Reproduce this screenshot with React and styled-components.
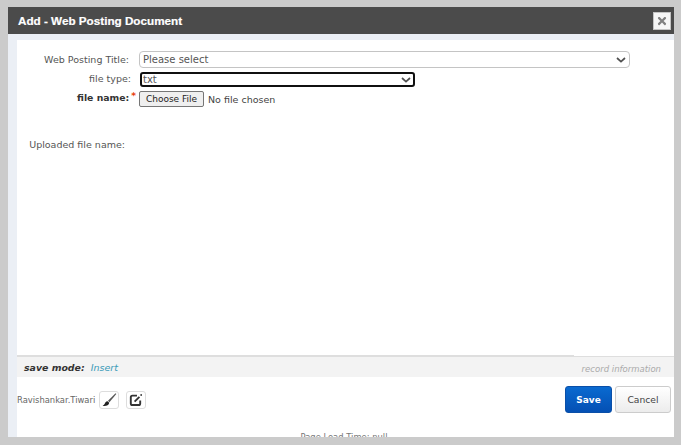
import styled, { createGlobalStyle } from 'styled-components'
import { FaTimes } from 'react-icons/fa'

const GlobalStyle = createGlobalStyle`
    html, body {
        margin: 0;
        padding: 0;
        height: 445px;
        overflow: hidden;
        background: #cbcbcb;
    }
`

const Page = styled.div`
    box-sizing: border-box;
    width: 681px;
    height: 445px;
    padding: 7px 7px 8px 8px;
    font-family: "DejaVu Sans", Verdana, sans-serif;
    font-size: 9.5px;
    color: #444;
`
const Dialog = styled.div`
    height: 430px;
    display: flex;
    flex-direction: column;
    overflow: hidden;
    background: #ebeff5;
`
const TitleBar = styled.div`
    flex: none;
    height: 27px;
    background: #4b4b4b;
    display: flex;
    align-items: center;
    justify-content: space-between;
    padding: 0 3px 0 10px;
`
const Title = styled.h1`
    margin: 0;
    font-family: "Liberation Sans", Arial, sans-serif;
    font-size: 11.7px;
    font-weight: 700;
    color: #fff;
    -webkit-text-stroke: 0.2px #fff;
`
const CloseButton = styled.button`
    box-sizing: border-box;
    width: 18px;
    height: 18px;
    padding: 0;
    border: 1px solid #c4c4c4;
    background: #f6f6f6;
    color: #808080;
    display: flex;
    align-items: center;
    justify-content: center;
    font-size: 12px;
`
const Body = styled.div`
    flex: 1;
    margin: 6px 0 0 9px;
    background: #fff;
    display: flex;
    flex-direction: column;
    min-height: 0;
`
const Form = styled.div`
    flex: none;
    height: 315px;
    padding-top: 11px;
    box-sizing: border-box;
`
const Row = styled.div`
    display: flex;
    align-items: center;
    height: ${(p) => p.$height}px;
    margin-bottom: ${(p) => p.$gap || 0}px;
`
const Label = styled.label`
    flex: none;
    box-sizing: border-box;
    width: ${(p) => p.$width}px;
    padding-bottom: ${(p) => p.$lift || 0}px;
    text-align: right;
    font-weight: ${(p) => (p.$bold ? 700 : 400)};
    font-size: ${(p) => (p.$bold ? 9.3 : 9.5)}px;
    color: ${(p) => (p.$bold ? '#333' : '#555')};
    white-space: nowrap;
`
const Star = styled.span`
    color: #e8400c;
    font-size: 9px;
    margin-left: 2px;
    position: relative;
    top: -2px;
`
const SelectBox = styled.div`
    box-sizing: border-box;
    height: ${(p) => p.$height}px;
    width: ${(p) => p.$width}px;
    margin-left: ${(p) => p.$left}px;
    border: ${(p) => (p.$focused ? '2px solid #101010' : '1px solid #c4c4c4')};
    border-radius: ${(p) => (p.$focused ? 3 : 4)}px;
    display: flex;
    align-items: center;
    justify-content: space-between;
    padding: ${(p) => (p.$focused ? '0 2px 0 1px' : '0 3px 0 3px')};
    font-size: 10px;
    color: #555;
    background: #fff;
`
const Chevron = () => (
    <svg width="10" height="6" viewBox="0 0 10 6">
        <path d="M1 1l4 3.6L9 1" fill="none" stroke="#505050" strokeWidth="1.7" />
    </svg>
)
const BrushIcon = () => (
    <svg width="18" height="16" viewBox="0 0 18 16">
        <path d="M15.6 1.2 8 8.8l1.4 1.4L16.3 2z" fill="#555" />
        <path d="M7.6 9.2C5.6 9.3 5.2 10.8 4.6 12 4.2 12.8 3.4 13.4 2.6 13.8 5.6 14.4 9 13.4 9.2 10.8z" fill="#222" />
    </svg>
)
const EditIcon = () => (
    <svg width="16" height="14" viewBox="0 0 16 14">
        <path d="M9 2.6H4.4A1.6 1.6 0 0 0 2.8 4.2v6.2A1.6 1.6 0 0 0 4.4 12h6.2a1.6 1.6 0 0 0 1.6-1.6V7.6" fill="none" stroke="#333" strokeWidth="1.9" />
        <path d="M6.6 8.6 11.4 3.8" fill="none" stroke="#333" strokeWidth="1.9" />
        <rect x="12.4" y="1.2" width="1.6" height="1.6" fill="#333" />
    </svg>
)
const FileRow = styled.div`
    display: flex;
    align-items: center;
    margin-left: 3px;
`
const ChooseButton = styled.button`
    box-sizing: border-box;
    width: 65px;
    height: 16px;
    padding: 0;
    border: 1px solid #767676;
    border-radius: 2px;
    background: #efefef;
    color: #222;
    font-family: "DejaVu Sans", Verdana, sans-serif;
    font-size: 9px;
    line-height: 14px;
`
const FileText = styled.span`
    margin-left: 4px;
    color: #444;
`
const Status = styled.div`
    flex: none;
    height: 22px;
    box-sizing: border-box;
    border-top: 2px solid #dedede;
    background: #f3f3f3;
    display: flex;
    align-items: center;
    justify-content: space-between;
    padding: 0 13px 0 7px;
    position: relative;
    &::after {
        content: '';
        position: absolute;
        top: -2px;
        right: 0;
        width: 100px;
        height: 1px;
        background: #fff;
    }
`
const Mode = styled.span`
    font-style: italic;
    font-weight: 700;
    font-size: 9.4px;
    color: #333;
`
const ModeValue = styled.span`
    font-style: italic;
    color: #3a9ab8;
    margin-left: 6px;
`
const RecordInfo = styled.span`
    font-style: italic;
    font-size: 8.5px;
    color: #aaa;
    padding-top: 3px;
`
const Actions = styled.div`
    flex: none;
    height: 51px;
    display: flex;
    align-items: center;
    justify-content: space-between;
    padding: 0 3px 6px 0;
    box-sizing: border-box;
`
const UserTools = styled.div`
    display: flex;
    align-items: center;
    font-size: 8.4px;
    color: #666;
`
const ToolButton = styled.button`
    box-sizing: border-box;
    width: 20px;
    height: 18px;
    margin-left: ${(p) => p.$left}px;
    padding: 0;
    border: 1px solid #ddd;
    border-radius: 3px;
    background: #fff;
    display: flex;
    align-items: center;
    justify-content: center;
`
const ButtonGroup = styled.div`
    display: flex;
    gap: 3px;
`
const SaveButton = styled.button`
    box-sizing: border-box;
    width: 47px;
    height: 27px;
    padding: 0;
    border: 1px solid #0a4fa8;
    border-radius: 3px;
    background: linear-gradient(#0a6ad0, #0450b4);
    color: #fff;
    font-family: "DejaVu Sans", Verdana, sans-serif;
    font-size: 9px;
    font-weight: 700;
`
const CancelButton = styled.button`
    box-sizing: border-box;
    width: 56px;
    height: 27px;
    padding: 0;
    border: 1px solid #ccc;
    border-radius: 3px;
    background: linear-gradient(#fff, #ececec);
    color: #444;
    font-family: "DejaVu Sans", Verdana, sans-serif;
    font-size: 9.2px;
`
const LoadTime = styled.div`
    text-align: center;
    font-size: 8.4px;
    color: #777;
    padding-right: 3px;
    margin-top: 4px;
`

const App = () => {
    return (
        <Page>
            <GlobalStyle />
            <Dialog>
                <TitleBar>
                    <Title>Add - Web Posting Document</Title>
                    <CloseButton><FaTimes /></CloseButton>
                </TitleBar>
                <Body>
                    <Form>
                        <Row $height={17} $gap={4}>
                            <Label $width={112}>Web Posting Title:</Label>
                            <SelectBox $height={17} $width={491} $left={10}>
                                Please select
                                <Chevron />
                            </SelectBox>
                        </Row>
                        <Row $height={15} $gap={4}>
                            <Label $width={114} $lift={3}>file type:</Label>
                            <SelectBox $height={15} $width={275} $left={9} $focused>
                                txt
                                <Chevron />
                            </SelectBox>
                        </Row>
                        <Row $height={16} $gap={29}>
                            <Label $width={119} $bold $lift={4}>file name:<Star>*</Star></Label>
                            <FileRow>
                                <ChooseButton>Choose File</ChooseButton>
                                <FileText>No file chosen</FileText>
                            </FileRow>
                        </Row>
                        <Row $height={16}>
                            <Label $width={108}>Uploaded file name:</Label>
                        </Row>
                    </Form>
                    <Status>
                        <span>
                            <Mode>save mode:</Mode>
                            <ModeValue>Insert</ModeValue>
                        </span>
                        <RecordInfo>record information</RecordInfo>
                    </Status>
                    <Actions>
                        <UserTools>
                            Ravishankar.Tiwari
                            <ToolButton $left={4}><BrushIcon /></ToolButton>
                            <ToolButton $left={7}><EditIcon /></ToolButton>
                        </UserTools>
                        <ButtonGroup>
                            <SaveButton>Save</SaveButton>
                            <CancelButton>Cancel</CancelButton>
                        </ButtonGroup>
                    </Actions>
                    <LoadTime>Page Load Time: null</LoadTime>
                </Body>
            </Dialog>
        </Page>
    )
}

export default App
